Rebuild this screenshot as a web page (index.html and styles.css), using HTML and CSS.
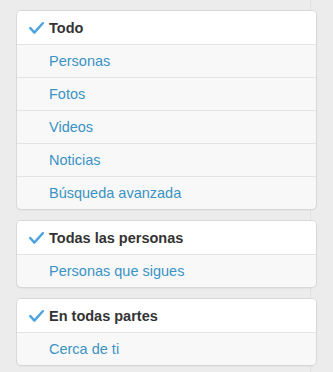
FILE: index.html
```html
<!DOCTYPE html>
<html lang="es">
<head>
    <meta charset="UTF-8">
    <title>Filtros de búsqueda</title>
    <link rel="stylesheet" href="styles.css">
</head>
<body>
    <div class="sidebar">
        <ul class="filter-card">
            <li class="filter-item selected">
                <svg class="check" viewBox="0 0 15 12" width="15" height="12"><path d="M1.3 6 L5.3 10.6 L13.8 1.2"/></svg>
                Todo
            </li>
            <li class="filter-item"><a href="#">Personas</a></li>
            <li class="filter-item"><a href="#">Fotos</a></li>
            <li class="filter-item"><a href="#">Videos</a></li>
            <li class="filter-item"><a href="#">Noticias</a></li>
            <li class="filter-item"><a href="#">Búsqueda avanzada</a></li>
        </ul>

        <ul class="filter-card">
            <li class="filter-item selected">
                <svg class="check" viewBox="0 0 15 12" width="15" height="12"><path d="M1.3 6 L5.3 10.6 L13.8 1.2"/></svg>
                Todas las personas
            </li>
            <li class="filter-item"><a href="#">Personas que sigues</a></li>
        </ul>

        <ul class="filter-card">
            <li class="filter-item selected">
                <svg class="check" viewBox="0 0 15 12" width="15" height="12"><path d="M1.3 6 L5.3 10.6 L13.8 1.2"/></svg>
                En todas partes
            </li>
            <li class="filter-item"><a href="#">Cerca de ti</a></li>
        </ul>
    </div>
</body>
</html>
```

FILE: styles.css
```css
:root {
    --page-bg: #ececec;
    --card-border: #d8d8d8;
    --row-border: #e4e4e4;
    --row-bg: #f8f8f8;
    --text-dark: #333333;
    --link: #3a93c4;
    --check: #4ba3df;
}

body {
    margin: 0;
    background: var(--page-bg);
    font-family: "Liberation Sans", Arial, sans-serif;
    font-size: 14.5px;
}

.sidebar {
    width: 311px;
    min-height: 372px;
    box-sizing: border-box;
    padding: 10px 0 0 16px;
    border-right: 1px solid #e0e0e0;
    display: flex;
    flex-direction: column;
    gap: 10px;
}

/* --- Filter cards --- */
.filter-card {
    list-style: none;
    margin: 0;
    padding: 0;
    width: 301px;
    box-sizing: border-box;
    background: var(--row-bg);
    border: 1px solid var(--card-border);
    border-radius: 5px;
    overflow: hidden;
    box-shadow: 0 1px 1px rgba(0, 0, 0, 0.03);
}

.filter-item {
    height: 32px;
    display: flex;
    align-items: center;
    padding-left: 32px;
    border-top: 1px solid var(--row-border);
}
.filter-item:first-child {
    height: 33px;
    border-top: none;
}

.filter-item a {
    color: var(--link);
    text-decoration: none;
}

.filter-item.selected {
    background: #ffffff;
    color: var(--text-dark);
    font-weight: bold;
    padding-left: 12px;
    gap: 5px;
}

.check {
    fill: none;
    stroke: var(--check);
    stroke-width: 2.4;
    stroke-linecap: round;
    stroke-linejoin: round;
}
```
